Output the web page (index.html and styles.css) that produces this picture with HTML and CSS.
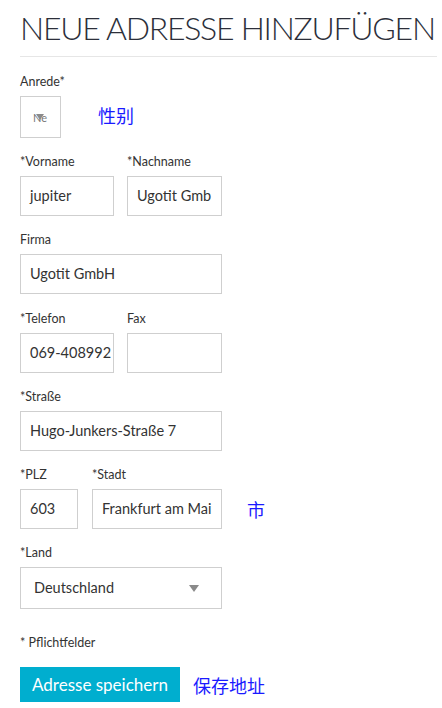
FILE: index.html
```html
<!DOCTYPE html>
<html lang="de">
<head>
<meta charset="utf-8">
<title>Neue Adresse hinzufügen</title>
<link rel="stylesheet" href="styles.css">
</head>
<body>
<div class="page">
  <h1 class="title">NEUE ADRESSE HINZUFÜGEN</h1>
  <div class="divider"></div>
  <form class="form">
    <div class="field">
      <label class="label">Anrede*</label>
      <div class="annot-row">
        <div class="salutation"><span class="sal-text">Ne</span><span class="sal-arrow"></span></div>
        <span class="annot annot-gender">性别</span>
      </div>
    </div>
    <div class="row two">
      <div class="field">
        <label class="label">*Vorname</label>
        <div class="input">jupiter</div>
      </div>
      <div class="field">
        <label class="label">*Nachname</label>
        <div class="input">Ugotit Gmb</div>
      </div>
    </div>
    <div class="field field-wide">
      <label class="label">Firma</label>
      <div class="input full">Ugotit GmbH</div>
    </div>
    <div class="row two">
      <div class="field">
        <label class="label">*Telefon</label>
        <div class="input">069-408992</div>
      </div>
      <div class="field">
        <label class="label">Fax</label>
        <div class="input"></div>
      </div>
    </div>
    <div class="field">
      <label class="label">*Straße</label>
      <div class="input full">Hugo-Junkers-Straße 7</div>
    </div>
    <div class="annot-row end">
      <div class="row city">
        <div class="field">
          <label class="label">*PLZ</label>
          <div class="input">603</div>
        </div>
        <div class="field">
          <label class="label">*Stadt</label>
          <div class="input">Frankfurt am Mai</div>
        </div>
      </div>
      <span class="annot annot-city">市</span>
    </div>
    <div class="field">
      <label class="label">*Land</label>
      <div class="select full"><span>Deutschland</span><span class="arrow"></span></div>
    </div>
    <p class="required">* Pflichtfelder</p>
    <div class="annot-row">
      <button type="button" class="btn">Adresse speichern</button>
      <span class="annot annot-save">保存地址</span>
    </div>
  </form>
</div>
</body>
</html>
```

FILE: styles.css
```css
html, body {
  margin: 0;
  padding: 0;
  background: #ffffff;
}
body {
  font-family: Lato, "Liberation Sans", "Noto Sans CJK SC", sans-serif;
  color: #333333;
}
.page {
  padding: 0 0 0 20px;
}
.title {
  margin: 0;
  padding-top: 8px;
  font-family: Lato, "Liberation Sans", sans-serif;
  font-weight: 300;
  font-size: 32px;
  line-height: 40px;
  letter-spacing: -1.25px;
  color: #2c2f3a;
  white-space: nowrap;
}
.divider {
  margin-top: 8px;
  width: 417px;
  border-top: 1px solid #e6e6e6;
}
.form {
  margin-top: 17px;
  width: 202px;
}
.field {
  margin-bottom: 16px;
}
.field.field-wide {
  margin-bottom: 17px;
}
.label {
  display: block;
  font-size: 12.5px;
  line-height: 16px;
  margin-bottom: 6px;
  color: #333333;
}
.row {
  display: grid;
  column-gap: 13px;
}
.row .field {
  margin-bottom: 0;
}
.row.two {
  grid-template-columns: 94px 95px;
  margin-bottom: 16px;
}
.row.city {
  grid-template-columns: 58px 130px;
  column-gap: 14px;
  width: 202px;
  flex: none;
}
.input, .select {
  box-sizing: border-box;
  height: 40px;
  border: 1px solid #cfcfcf;
  padding: 0 9px;
  font-size: 14.5px;
  line-height: 38px;
  color: #333333;
  white-space: nowrap;
  overflow: hidden;
}
.full {
  width: 202px;
}
.select {
  height: 42px;
  line-height: 40px;
  padding-left: 13px;
  display: flex;
  justify-content: space-between;
  align-items: center;
  padding-right: 22px;
}
.arrow {
  width: 0;
  height: 0;
  border-left: 5px solid transparent;
  border-right: 5px solid transparent;
  border-top: 7px solid #8a8a8a;
}
.annot-row {
  display: flex;
  align-items: center;
  width: 300px;
}
.annot-row.end {
  align-items: flex-end;
  margin-bottom: 16px;
}
.salutation {
  box-sizing: border-box;
  position: relative;
  width: 41px;
  height: 42px;
  border: 1px solid #cfcfcf;
  overflow: hidden;
  display: flex;
  align-items: center;
  padding-left: 12px;
  font-size: 11px;
  color: #777777;
}
.sal-arrow {
  position: absolute;
  left: 15px;
  top: 17px;
  width: 0;
  height: 0;
  border-left: 4px solid transparent;
  border-right: 4px solid transparent;
  border-top: 6px solid #8a8a8a;
}
.annot {
  font-family: "Noto Sans CJK SC", sans-serif;
  color: #1a1aff;
  font-size: 18px;
  line-height: 24px;
  white-space: nowrap;
}
.annot-gender {
  margin-left: 37px;
  margin-top: -4px;
}
.annot-city {
  margin-left: 25px;
  line-height: 40px;
}
.required {
  margin: 26px 0 16px;
  font-size: 12.5px;
  line-height: 16px;
  color: #333333;
}
.btn {
  flex: none;
  height: 35px;
  border: 0;
  padding: 0 12px;
  background: #00aecf;
  color: #ffffff;
  font-family: Lato, "Liberation Sans", sans-serif;
  font-size: 17px;
  cursor: pointer;
}
.annot-save {
  margin-left: 13px;
}
```
